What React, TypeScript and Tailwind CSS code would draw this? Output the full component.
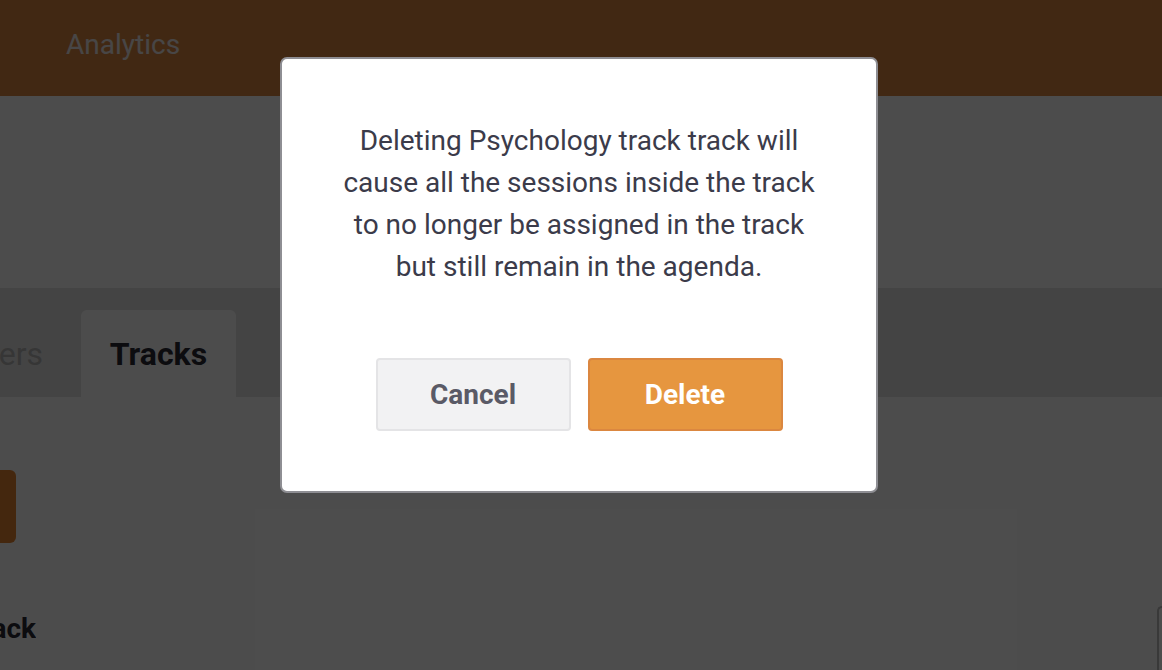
import React from "react";

export default function App() {
  return (
    <div className="relative h-[670px] w-[1162px] overflow-hidden bg-white" style={{ fontFamily: "Roboto, 'Liberation Sans', sans-serif" }}>
      {/* Page */}
      <div className="flex h-full flex-col">
        <header className="flex h-[96px] shrink-0 items-center bg-[#db8741] pb-[6px] pl-[66px]">
          <span className="text-[28px] text-[#f0ebea]">Analytics</span>
        </header>
        <div className="h-[192px] shrink-0 bg-white" />
        <nav className="flex h-[109px] shrink-0 items-end bg-[#e5e5e5]">
          <div className="flex h-[87px] w-[73px] items-center justify-end overflow-hidden pr-[30px]">
            <span className="whitespace-nowrap text-[32px] text-[#b5b5b5]">Speakers</span>
          </div>
          <div className="ml-[8px] flex h-[87px] w-[155px] items-center justify-center rounded-t-md bg-white">
            <span className="text-[32px] font-bold text-[#2a2a35]">Tracks</span>
          </div>
        </nav>
        <div className="flex flex-1 bg-white">
          <div className="flex flex-1 flex-col">
            <div className="-ml-[14px] mt-[73px] h-[73px] w-[30px] rounded-md bg-[#e58430]" />
            <div className="mt-[65px] flex w-[36px] justify-end overflow-hidden">
              <span className="whitespace-nowrap text-[28px] font-bold text-[#2a2a35]">Track</span>
            </div>
          </div>
          <div className="mt-[209px] h-[80px] w-[5px] rounded-tl-md border-l-2 border-t-2 border-[#bfbfbf]" />
        </div>
      </div>

      {/* Backdrop */}
      <div className="absolute inset-0 bg-black/70" />

      {/* Modal */}
      <div className="absolute inset-0 flex items-start justify-center pr-[4px] pt-[57px]">
        <div className="flex w-[598px] flex-col items-center rounded-[7px] border-2 border-[#8e8e93] bg-white pb-[60px] pt-[61px]">
          <p className="text-center text-[28px] leading-[42px] text-[#3b3b4a]">
            Deleting Psychology track track will
            <br />
            cause all the sessions inside the track
            <br />
            to no longer be assigned in the track
            <br />
            but still remain in the agenda.
          </p>
          <div className="mt-[70px] flex gap-[17px]">
            <button className="h-[73px] w-[195px] rounded-[4px] border-2 border-[#e4e4e6] bg-[#f2f2f3] text-[28px] font-bold text-[#5a5a66]">
              Cancel
            </button>
            <button className="h-[73px] w-[195px] rounded-[4px] border-2 border-[#db8740] bg-[#e6963f] text-[28px] font-bold text-white">
              Delete
            </button>
          </div>
        </div>
      </div>
    </div>
  );
}
